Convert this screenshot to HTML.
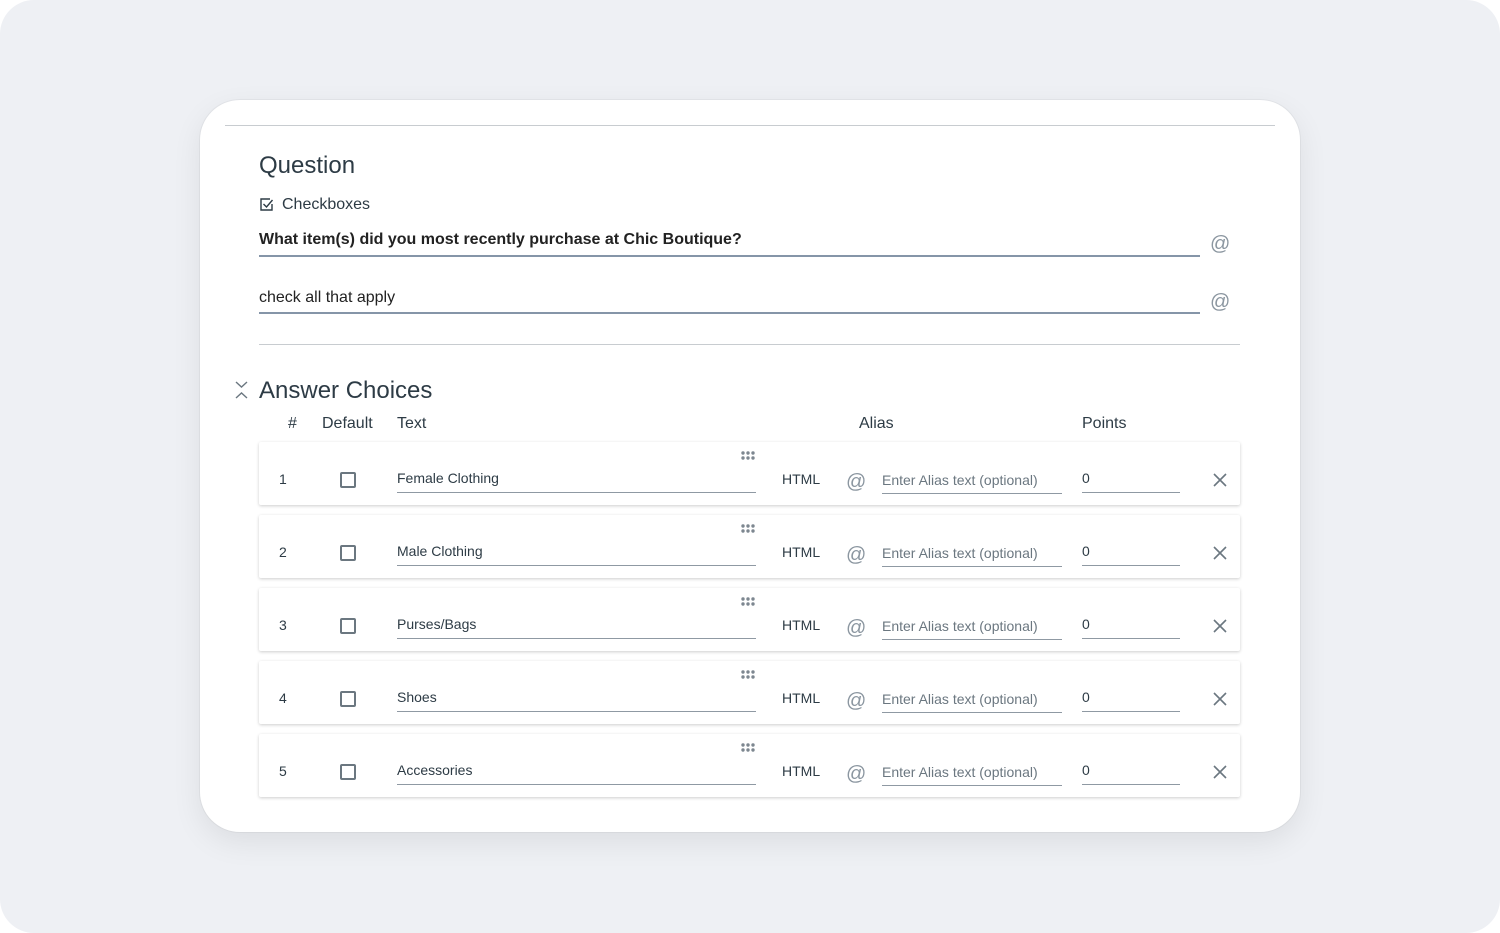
<!DOCTYPE html>
<html><head><style>
html,body{margin:0;padding:0;background:#fff;}
body{width:1500px;height:933px;position:relative;overflow:hidden;font-family:"Liberation Sans",sans-serif;color:#2d3b45;}
.bg{position:absolute;left:0;top:0;width:1500px;height:933px;background:#eef0f4;border-radius:34px;}
.card{position:absolute;left:200px;top:100px;width:1100px;height:732px;background:#fff;border-radius:40px;box-shadow:0 10px 30px rgba(0,0,0,0.08),0 0 0 1px #e4e6ea;}
.a{position:absolute;white-space:nowrap;}
.line{position:absolute;height:2px;background:#8595a8;}
.row{position:absolute;left:259px;width:981px;height:63px;background:#fff;box-shadow:0 1px 3px rgba(0,0,0,0.2);border-radius:2px;}
.ul{position:absolute;height:1px;background:#8f99a3;}
.cb{position:absolute;width:12px;height:12px;border:2px solid #6b7780;border-radius:2px;}
.at{position:absolute;color:#8b96a0;font-size:20px;}
</style></head><body>
<div class="bg"></div>
<div class="card"></div>
<div class="a" style="left:225px;top:125px;width:1050px;height:1px;background:#c8ccd0"></div>
<div class="a" style="left:259px;top:152px;font-size:24px;color:#2d3b45">Question</div>
<svg class="a" style="left:259px;top:197px" width="15" height="15" viewBox="0 0 15 15"><path d="M11 2H2v11h11V7" fill="none" stroke="#2d3b45" stroke-width="1.4"/><path d="M4.5 7l3 3 6-7" fill="none" stroke="#2d3b45" stroke-width="1.4"/></svg>
<div class="a" style="left:282px;top:196px;font-size:16px">Checkboxes</div>
<div class="a" style="left:259px;top:231px;font-size:16px;font-weight:bold;color:#222">What item(s) did you most recently purchase at Chic Boutique?</div>
<div class="line" style="left:259px;top:255px;width:941px"></div>
<div class="at" style="left:1210px;top:233px">@</div>
<div class="a" style="left:259px;top:289px;font-size:16px;color:#222">check all that apply</div>
<div class="line" style="left:259px;top:312px;width:941px"></div>
<div class="at" style="left:1210px;top:291px">@</div>
<div class="a" style="left:259px;top:344px;width:981px;height:1px;background:#c8ccd0"></div>
<svg class="a" style="left:235px;top:381px" width="13" height="18" viewBox="0 0 13 18"><path d="M1 1l5.5 5 5.5-5M1 17l5.5-5 5.5 5" fill="none" stroke="#6b7780" stroke-width="1.4"/></svg>
<div class="a" style="left:259px;top:377px;font-size:24px">Answer Choices</div>
<div class="a" style="left:288px;top:415px;font-size:16px">#</div>
<div class="a" style="left:322px;top:415px;font-size:16px">Default</div>
<div class="a" style="left:397px;top:415px;font-size:16px">Text</div>
<div class="a" style="left:859px;top:415px;font-size:16px">Alias</div>
<div class="a" style="left:1082px;top:415px;font-size:16px">Points</div>

<div class="row" style="top:442px"></div>
<div class="row" style="top:515px"></div>
<div class="row" style="top:588px"></div>
<div class="row" style="top:661px"></div>
<div class="row" style="top:734px"></div>

<svg width="0" height="0" style="position:absolute"><defs><g id="dots" fill="#7d8790"><circle cx="2" cy="2" r="1.7"/><circle cx="7" cy="2" r="1.7"/><circle cx="12" cy="2" r="1.7"/><circle cx="2" cy="7" r="1.7"/><circle cx="7" cy="7" r="1.7"/><circle cx="12" cy="7" r="1.7"/></g><path id="x" d="M1 1l12 12M13 1L1 13" stroke="#6b7780" stroke-width="1.6" fill="none"/></defs></svg>

<div style="position:absolute;left:0;top:442px">
<div class="a" style="left:279px;top:29px;font-size:14px">1</div><div class="cb" style="left:340px;top:30px"></div>
<div class="a" style="left:397px;top:28px;font-size:14px">Female Clothing</div><div class="ul" style="left:397px;top:50px;width:359px"></div>
<svg class="a" style="left:741px;top:9px" width="16" height="10"><use href="#dots"/></svg>
<div class="a" style="left:782px;top:29px;font-size:14px">HTML</div><div class="at" style="left:846px;top:29px">@</div>
<div class="a" style="left:882px;top:30px;font-size:14px;color:#6b7780">Enter Alias text (optional)</div><div class="ul" style="left:882px;top:51px;width:180px"></div>
<div class="a" style="left:1082px;top:28px;font-size:14px">0</div><div class="ul" style="left:1082px;top:50px;width:98px"></div>
<svg class="a" style="left:1213px;top:31px" width="14" height="14"><use href="#x"/></svg>
</div>
<div style="position:absolute;left:0;top:515px">
<div class="a" style="left:279px;top:29px;font-size:14px">2</div><div class="cb" style="left:340px;top:30px"></div>
<div class="a" style="left:397px;top:28px;font-size:14px">Male Clothing</div><div class="ul" style="left:397px;top:50px;width:359px"></div>
<svg class="a" style="left:741px;top:9px" width="16" height="10"><use href="#dots"/></svg>
<div class="a" style="left:782px;top:29px;font-size:14px">HTML</div><div class="at" style="left:846px;top:29px">@</div>
<div class="a" style="left:882px;top:30px;font-size:14px;color:#6b7780">Enter Alias text (optional)</div><div class="ul" style="left:882px;top:51px;width:180px"></div>
<div class="a" style="left:1082px;top:28px;font-size:14px">0</div><div class="ul" style="left:1082px;top:50px;width:98px"></div>
<svg class="a" style="left:1213px;top:31px" width="14" height="14"><use href="#x"/></svg>
</div>
<div style="position:absolute;left:0;top:588px">
<div class="a" style="left:279px;top:29px;font-size:14px">3</div><div class="cb" style="left:340px;top:30px"></div>
<div class="a" style="left:397px;top:28px;font-size:14px">Purses/Bags</div><div class="ul" style="left:397px;top:50px;width:359px"></div>
<svg class="a" style="left:741px;top:9px" width="16" height="10"><use href="#dots"/></svg>
<div class="a" style="left:782px;top:29px;font-size:14px">HTML</div><div class="at" style="left:846px;top:29px">@</div>
<div class="a" style="left:882px;top:30px;font-size:14px;color:#6b7780">Enter Alias text (optional)</div><div class="ul" style="left:882px;top:51px;width:180px"></div>
<div class="a" style="left:1082px;top:28px;font-size:14px">0</div><div class="ul" style="left:1082px;top:50px;width:98px"></div>
<svg class="a" style="left:1213px;top:31px" width="14" height="14"><use href="#x"/></svg>
</div>
<div style="position:absolute;left:0;top:661px">
<div class="a" style="left:279px;top:29px;font-size:14px">4</div><div class="cb" style="left:340px;top:30px"></div>
<div class="a" style="left:397px;top:28px;font-size:14px">Shoes</div><div class="ul" style="left:397px;top:50px;width:359px"></div>
<svg class="a" style="left:741px;top:9px" width="16" height="10"><use href="#dots"/></svg>
<div class="a" style="left:782px;top:29px;font-size:14px">HTML</div><div class="at" style="left:846px;top:29px">@</div>
<div class="a" style="left:882px;top:30px;font-size:14px;color:#6b7780">Enter Alias text (optional)</div><div class="ul" style="left:882px;top:51px;width:180px"></div>
<div class="a" style="left:1082px;top:28px;font-size:14px">0</div><div class="ul" style="left:1082px;top:50px;width:98px"></div>
<svg class="a" style="left:1213px;top:31px" width="14" height="14"><use href="#x"/></svg>
</div>
<div style="position:absolute;left:0;top:734px">
<div class="a" style="left:279px;top:29px;font-size:14px">5</div><div class="cb" style="left:340px;top:30px"></div>
<div class="a" style="left:397px;top:28px;font-size:14px">Accessories</div><div class="ul" style="left:397px;top:50px;width:359px"></div>
<svg class="a" style="left:741px;top:9px" width="16" height="10"><use href="#dots"/></svg>
<div class="a" style="left:782px;top:29px;font-size:14px">HTML</div><div class="at" style="left:846px;top:29px">@</div>
<div class="a" style="left:882px;top:30px;font-size:14px;color:#6b7780">Enter Alias text (optional)</div><div class="ul" style="left:882px;top:51px;width:180px"></div>
<div class="a" style="left:1082px;top:28px;font-size:14px">0</div><div class="ul" style="left:1082px;top:50px;width:98px"></div>
<svg class="a" style="left:1213px;top:31px" width="14" height="14"><use href="#x"/></svg>
</div>
</body></html>
